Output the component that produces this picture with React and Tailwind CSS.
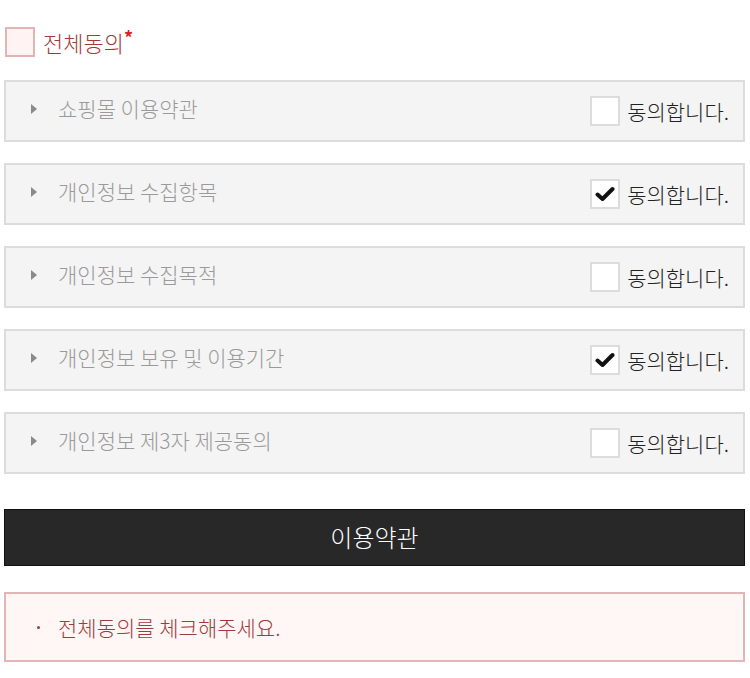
import React from "react";

const items = [
  { title: "쇼핑몰 이용약관", checked: false },
  { title: "개인정보 수집항목", checked: true },
  { title: "개인정보 수집목적", checked: false },
  { title: "개인정보 보유 및 이용기간", checked: true },
  { title: "개인정보 제3자 제공동의", checked: false },
];

function Check() {
  return (
    <svg width="20" height="16" viewBox="0 0 20 16">
      <path d="M2.5 8.5 L7.5 13 L17.5 3" fill="none" stroke="#111" strokeWidth="4" strokeLinecap="round" strokeLinejoin="round" />
    </svg>
  );
}

export default function App() {
  return (
    <div
      className="w-[750px] h-[678px] bg-white pl-[4px] pr-[5px] font-light"
      style={{ fontFamily: '"Noto Sans CJK KR", "Noto Sans", sans-serif' }}
    >
      <div className="pt-[27px] flex items-center">
        <div className="ml-[1px] w-[30px] h-[30px] border-2 border-[#e4b4b4] bg-[#fff3f3]" />
        <span className="ml-[8px] text-[22px] leading-none text-[#a33a3a]">전체동의</span>
        <span className="self-start mt-[1px] text-[18px] leading-none font-bold text-[#e02020]">*</span>
      </div>

      <div className="mt-[23px] flex flex-col gap-[21px]">
        {items.map((it) => (
          <div
            key={it.title}
            className="h-[62px] border-2 border-[#dcdcdc] bg-[#f4f4f4] flex items-center"
          >
            <svg className="ml-[25px] -mt-[4px]" width="6" height="10" viewBox="0 0 6 10">
              <path d="M0 0 L6 5 L0 10 Z" fill="#8a8a8a" />
            </svg>
            <span className="ml-[21px] text-[21px] leading-none text-[#9a9a9a] -mt-[5px]">{it.title}</span>
            <div className="ml-auto flex items-center">
              <div className="w-[30px] h-[30px] border-2 border-[#dcdcdc] bg-white flex items-center justify-center">
                {it.checked && <Check />}
              </div>
              <span className="ml-[7px] mr-[14px] text-[21px] leading-none text-[#222]">동의합니다.</span>
            </div>
          </div>
        ))}
      </div>

      <div className="mt-[35px] h-[57px] bg-[#282828] border border-[#111] flex items-center justify-center">
        <span className="text-[24px] leading-none text-white -mt-[2px]">이용약관</span>
      </div>

      <div className="mt-[26px] h-[70px] border-2 border-[#e2b6b6] bg-[#fff6f6] flex items-center">
        <span className="ml-[31px] w-[3px] h-[3px] rounded-full bg-[#a33a3a]" />
        <span className="ml-[18px] text-[21px] leading-none text-[#a33a3a]">전체동의를 체크해주세요.</span>
      </div>
    </div>
  );
}
